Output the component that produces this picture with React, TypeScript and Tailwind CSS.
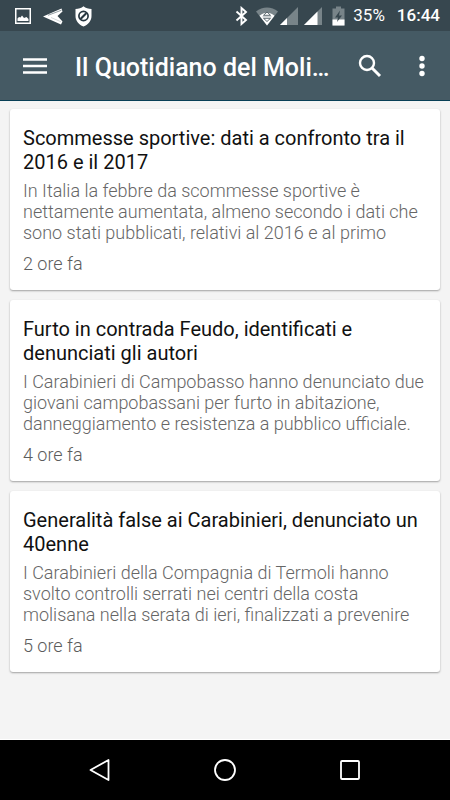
type Article = {
  title: string;
  excerpt: string;
  time: string;
};

const articles: Article[] = [
  {
    title: "Scommesse sportive: dati a confronto tra il 2016 e il 2017",
    excerpt:
      "In Italia la febbre da scommesse sportive è nettamente aumentata, almeno secondo i dati che sono stati pubblicati, relativi al 2016 e al primo",
    time: "2 ore fa",
  },
  {
    title: "Furto in contrada Feudo, identificati e denunciati gli autori",
    excerpt:
      "I Carabinieri di Campobasso hanno denunciato due giovani campobassani per furto in abitazione, danneggiamento e resistenza a pubblico ufficiale.",
    time: "4 ore fa",
  },
  {
    title: "Generalità false ai Carabinieri, denunciato un 40enne",
    excerpt:
      "I Carabinieri della Compagnia di Termoli hanno svolto controlli serrati nei centri della costa molisana nella serata di ieri, finalizzati a prevenire",
    time: "5 ore fa",
  },
];

function StatusBar() {
  return (
    <div className="flex h-[31px] items-center bg-[#37474f] pl-[15px] pr-[10px] pt-px text-[17px] text-white">
      <div className="flex items-center gap-3">
        <svg width="16" height="16" viewBox="0 0 16 16" aria-hidden="true">
          <rect x="0.75" y="0.75" width="14.5" height="14.5" fill="none" stroke="#fff" strokeWidth="1.5" />
          <path d="M2.5 13V10.5L4 9L5.5 9.5L7 7.5L9 10L11.5 9L13.5 11V13Z" fill="#fff" />
        </svg>
        <svg width="20" height="17" viewBox="0 0 20 17" aria-hidden="true">
          <path d="M0 8.5L18.5 0.5L19.5 3.5L14.5 8L19.5 13.5L18 16.5Z" fill="#fff" />
          <path d="M5 7.3L18.5 2.2" stroke="#78868c" strokeWidth="0.8" />
          <path d="M8 9.5L18 13.8" stroke="#a5aeb2" strokeWidth="0.5" />
        </svg>
        <svg width="17" height="21" viewBox="0 0 17 21" aria-hidden="true">
          <path d="M8.5 0.3C10.5 2 13.5 3 16.5 3V10C16.5 14.5 13.5 18.7 8.5 20.6C3.5 18.7 0.5 14.5 0.5 10V3C3.5 3 6.5 2 8.5 0.3Z" fill="#fff" />
          <circle cx="8.5" cy="10" r="4.6" fill="none" stroke="#263640" strokeWidth="1.7" />
          <path d="M5.5 13L11.5 7" stroke="#263640" strokeWidth="2.2" />
        </svg>
      </div>

      <div className="ml-auto flex items-center">
        <svg width="13" height="20" viewBox="0 0 13 20" aria-hidden="true">
          <path d="M1.5 5.5L11 14L6.5 18V2L11 6L1.5 14.5" fill="none" stroke="#fff" strokeWidth="1.9" />
        </svg>
        <svg className="ml-2" width="22" height="19" viewBox="0 0 22 19" aria-hidden="true">
          <path d="M0 4.5C6.5 -0.7 15.5 -0.7 22 4.5L11 18.5Z" fill="#788489" />
          <path d="M3.5 8.7C8 4.7 14 4.7 18.5 8.7L11 18.5Z" fill="#fff" />
          <path d="M7.5 8.3L11 5L14.5 8.3ZM7.5 11.3L11 14.5L14.5 11.3Z" fill="#fff" stroke="#37474f" strokeWidth="0.8" />
          <path d="M6.5 9.8H15.5" stroke="#a5aeb2" strokeWidth="0.8" />
        </svg>
        <svg className="ml-[2px]" width="18" height="18" viewBox="0 0 18 18" aria-hidden="true">
          <path d="M18 0V18H0Z" fill="#788489" />
          <path d="M7 11V18H0Z" fill="#fff" />
        </svg>
        <svg className="ml-[6px]" width="18" height="18" viewBox="0 0 18 18" aria-hidden="true">
          <path d="M18 0V18H0Z" fill="#788489" />
          <path d="M13.5 4.5V18H0Z" fill="#fff" />
        </svg>
        <svg className="ml-[10px]" width="13" height="20" viewBox="0 0 13 20" aria-hidden="true">
          <path d="M4 0.5H9V2.5H12.5V19.5H0.5V2.5H4Z" fill="#788489" />
          <path d="M0.5 13.5H12.5V19.5H0.5Z" fill="#fff" />
          <path d="M8 4.5L3 11.5H6L5 16L10 9.5H7Z" fill="#37474f" />
        </svg>
        <span className="ml-2">35%</span>
        <span className="ml-3 font-medium">16:44</span>
      </div>
    </div>
  );
}

function AppBar() {
  return (
    <header className="flex h-[70px] items-center border-b border-[#083f56] bg-[#455a64] pl-[23px] pr-[18px] text-white">
      <button type="button" aria-label="Menu" className="shrink-0">
        <svg width="24" height="18" viewBox="0 0 24 18">
          <path d="M0 2.5H24M0 9H24M0 15.5H24" stroke="#fff" strokeWidth="2.5" />
        </svg>
      </button>
      <h1 className="ml-7 min-w-0 flex-1 truncate pt-1 text-[25px] font-medium">
        Il Quotidiano del Moli…
      </h1>
      <button type="button" aria-label="Cerca" className="ml-4 shrink-0">
        <svg width="24" height="24" viewBox="0 0 24 24">
          <circle cx="9" cy="9" r="7" fill="none" stroke="#fff" strokeWidth="2.4" />
          <path d="M14 14L22 22" stroke="#fff" strokeWidth="3" />
        </svg>
      </button>
      <button type="button" aria-label="Altre opzioni" className="ml-[30px] shrink-0">
        <svg width="20" height="22" viewBox="0 0 20 22">
          <circle cx="10" cy="3.5" r="2.7" fill="#fff" />
          <circle cx="10" cy="11" r="2.7" fill="#fff" />
          <circle cx="10" cy="18.5" r="2.7" fill="#fff" />
        </svg>
      </button>
    </header>
  );
}

function ArticleCard({ article }: { article: Article }) {
  return (
    <article className="rounded-[3px] bg-white px-[13px] pb-4 pt-[17px] shadow-[0_1px_2px_rgba(0,0,0,0.35)]">
      <h2 className="text-xl leading-6 text-[#111111]">{article.title}</h2>
      <p className="mt-[6px] text-lg font-light leading-[21px] text-[#666666]">
        {article.excerpt}
      </p>
      <p className="mt-[11px] text-lg font-light leading-5 text-[#5c5c5c]">{article.time}</p>
    </article>
  );
}

function NavBar() {
  return (
    <nav className="flex h-[61px] items-center justify-center gap-[101px] border-t border-white bg-black">
      <button type="button" aria-label="Indietro">
        <svg width="24" height="24" viewBox="0 0 24 24">
          <path d="M20.5 2V22L2.5 12Z" fill="none" stroke="#fff" strokeWidth="1.8" strokeLinejoin="round" />
        </svg>
      </button>
      <button type="button" aria-label="Home">
        <svg width="24" height="24" viewBox="0 0 24 24">
          <circle cx="12" cy="12" r="10" fill="none" stroke="#fff" strokeWidth="1.8" />
        </svg>
      </button>
      <button type="button" aria-label="App recenti">
        <svg width="24" height="24" viewBox="0 0 24 24">
          <rect x="3" y="3" width="18" height="18" rx="1" fill="none" stroke="#fff" strokeWidth="1.8" />
        </svg>
      </button>
    </nav>
  );
}

export default function App() {
  return (
    <div className="flex min-h-screen flex-col bg-[#f4f4f4] font-['Roboto',sans-serif]">
      <StatusBar />
      <AppBar />
      <main className="flex flex-1 flex-col gap-[10px] px-[10px] py-2">
        {articles.map((article) => (
          <ArticleCard key={article.title} article={article} />
        ))}
      </main>
      <NavBar />
    </div>
  );
}
